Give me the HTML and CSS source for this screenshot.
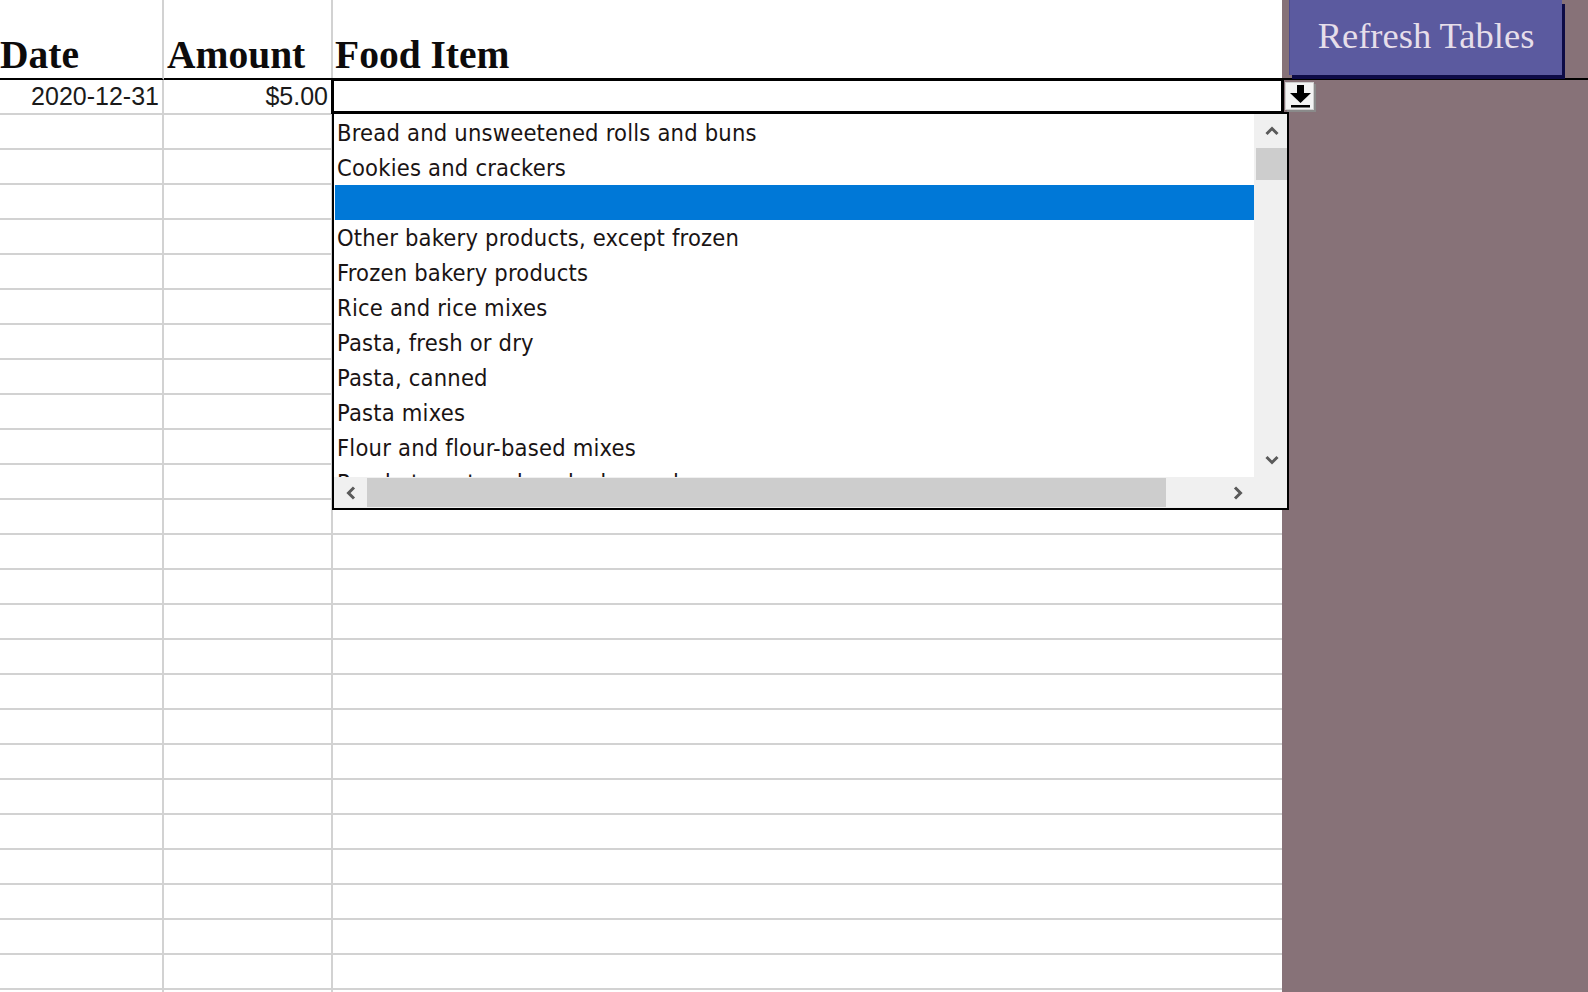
FILE: index.html
```html
<!DOCTYPE html>
<html lang="en">
<head>
<meta charset="utf-8">
<title>Food Log</title>
<link rel="stylesheet" href="styles.css">
</head>
<body>
<div class="app">
  <div class="sheet">
    <div class="row head">
      <div class="cell c1">Date</div>
      <div class="cell c2">Amount</div>
      <div class="cell c3">Food Item</div>
    </div>
    <div class="row data">
      <div class="cell c1">2020-12-31</div>
      <div class="cell c2">$5.00</div>
      <div class="cell c3"></div>
    </div>
    <div class="row"><div class="cell c1"></div><div class="cell c2"></div><div class="cell c3"></div></div>
    <div class="row"><div class="cell c1"></div><div class="cell c2"></div><div class="cell c3"></div></div>
    <div class="row"><div class="cell c1"></div><div class="cell c2"></div><div class="cell c3"></div></div>
    <div class="row"><div class="cell c1"></div><div class="cell c2"></div><div class="cell c3"></div></div>
    <div class="row"><div class="cell c1"></div><div class="cell c2"></div><div class="cell c3"></div></div>
    <div class="row"><div class="cell c1"></div><div class="cell c2"></div><div class="cell c3"></div></div>
    <div class="row"><div class="cell c1"></div><div class="cell c2"></div><div class="cell c3"></div></div>
    <div class="row"><div class="cell c1"></div><div class="cell c2"></div><div class="cell c3"></div></div>
    <div class="row"><div class="cell c1"></div><div class="cell c2"></div><div class="cell c3"></div></div>
    <div class="row"><div class="cell c1"></div><div class="cell c2"></div><div class="cell c3"></div></div>
    <div class="row"><div class="cell c1"></div><div class="cell c2"></div><div class="cell c3"></div></div>
    <div class="row"><div class="cell c1"></div><div class="cell c2"></div><div class="cell c3"></div></div>
    <div class="row"><div class="cell c1"></div><div class="cell c2"></div><div class="cell c3"></div></div>
    <div class="row"><div class="cell c1"></div><div class="cell c2"></div><div class="cell c3"></div></div>
    <div class="row"><div class="cell c1"></div><div class="cell c2"></div><div class="cell c3"></div></div>
    <div class="row"><div class="cell c1"></div><div class="cell c2"></div><div class="cell c3"></div></div>
    <div class="row"><div class="cell c1"></div><div class="cell c2"></div><div class="cell c3"></div></div>
    <div class="row"><div class="cell c1"></div><div class="cell c2"></div><div class="cell c3"></div></div>
    <div class="row"><div class="cell c1"></div><div class="cell c2"></div><div class="cell c3"></div></div>
    <div class="row"><div class="cell c1"></div><div class="cell c2"></div><div class="cell c3"></div></div>
    <div class="row"><div class="cell c1"></div><div class="cell c2"></div><div class="cell c3"></div></div>
    <div class="row"><div class="cell c1"></div><div class="cell c2"></div><div class="cell c3"></div></div>
    <div class="row"><div class="cell c1"></div><div class="cell c2"></div><div class="cell c3"></div></div>
    <div class="row"><div class="cell c1"></div><div class="cell c2"></div><div class="cell c3"></div></div>
    <div class="row"><div class="cell c1"></div><div class="cell c2"></div><div class="cell c3"></div></div>
    <div class="row"><div class="cell c1"></div><div class="cell c2"></div><div class="cell c3"></div></div>
  </div>
  <div class="panel">
    <div class="panel-top">
      <button class="refresh" type="button">Refresh Tables</button>
    </div>
  </div>

  <div class="sel-frame"></div>

  <div class="validate-btn">
    <svg width="26" height="26" viewBox="0 0 26 26" aria-hidden="true">
      <rect x="10" y="2" width="7" height="8" fill="#000"/>
      <polygon points="3,10 24,10 13.5,20" fill="#000"/>
      <rect x="4" y="22" width="19" height="2.5" fill="#000"/>
    </svg>
  </div>

  <div class="listbox">
    <div class="items">
      <div class="item">Bread and unsweetened rolls and buns</div>
      <div class="item">Cookies and crackers</div>
      <div class="item selected"></div>
      <div class="item">Other bakery products, except frozen</div>
      <div class="item">Frozen bakery products</div>
      <div class="item">Rice and rice mixes</div>
      <div class="item">Pasta, fresh or dry</div>
      <div class="item">Pasta, canned</div>
      <div class="item">Pasta mixes</div>
      <div class="item">Flour and flour-based mixes</div>
      <div class="item">Ready-to-eat and cooked cereals</div>
    </div>
    <div class="vscroll">
      <div class="sb-btn">
        <svg width="16" height="12" viewBox="0 0 16 12"><polyline points="2.5,9 8,3.5 13.5,9" fill="none" stroke="#5a5a5a" stroke-width="3"/></svg>
      </div>
      <div class="vthumb"></div>
      <div class="vtrack"></div>
      <div class="sb-btn">
        <svg width="16" height="12" viewBox="0 0 16 12"><polyline points="2.5,3 8,8.5 13.5,3" fill="none" stroke="#5a5a5a" stroke-width="3"/></svg>
      </div>
    </div>
    <div class="hscroll">
      <div class="sb-btn h">
        <svg width="12" height="16" viewBox="0 0 12 16"><polyline points="9,2.5 3.5,8 9,13.5" fill="none" stroke="#5a5a5a" stroke-width="3"/></svg>
      </div>
      <div class="hthumb"></div>
      <div class="htrack"></div>
      <div class="sb-btn h">
        <svg width="12" height="16" viewBox="0 0 12 16"><polyline points="3,2.5 8.5,8 3,13.5" fill="none" stroke="#5a5a5a" stroke-width="3"/></svg>
      </div>
    </div>
    <div class="corner"></div>
  </div>
</div>
</body>
</html>
```

FILE: styles.css
```css
html, body {
  margin: 0;
  padding: 0;
  background: #ffffff;
  overflow: hidden;
}

.app {
  position: relative;
  display: flex;
  width: 1588px;
  height: 992px;
  overflow: hidden;
  font-family: "Liberation Sans", Arial, sans-serif;
}

.sheet {
  flex: none;
  width: 1282px;
  background: #ffffff;
}

.row {
  display: grid;
  grid-template-columns: 164px 169px 949px;
  height: 35px;
}

.cell {
  box-sizing: border-box;
  border-right: 2px solid #d2d2d2;
  border-bottom: 2px solid #d2d2d2;
  overflow: hidden;
  white-space: nowrap;
}

.cell.c3 {
  border-right: none;
}

.head {
  height: 80px;
}

.head .cell {
  display: flex;
  align-items: flex-end;
  border-bottom: 2px solid #000000;
  padding: 0 0 3px 3px;
  font-family: "Liberation Serif", "Times New Roman", serif;
  font-weight: bold;
  font-size: 39.5px;
  line-height: 1;
  color: #0d0b0b;
}

.head .c1 {
  padding-left: 0;
}

.head .c3 {
  padding-left: 2px;
}

.data .cell {
  font-size: 25px;
  line-height: 33px;
  text-align: right;
  color: #1a1a1a;
  padding-right: 3px;
}

.data .c2 {
  padding-right: 3px;
}

.panel {
  flex: 1;
  background: #877278;
}

.panel-top {
  box-sizing: border-box;
  height: 80px;
  border-bottom: 2px solid #000000;
  padding-left: 7px;
}

.refresh {
  display: flex;
  align-items: center;
  justify-content: center;
  width: 273px;
  height: 75px;
  margin: 0;
  padding: 0 0 4px 0;
  border: none;
  border-left: 1px solid #4c4a90;
  background: #5b5a9f;
  box-shadow: 3px 4px 0 #0d0b46;
  color: #e6deea;
  font-family: "Liberation Serif", "Times New Roman", serif;
  font-size: 36.5px;
  cursor: pointer;
}

.sel-frame {
  position: absolute;
  left: 331px;
  top: 78px;
  width: 953px;
  height: 36px;
  box-sizing: border-box;
  border: 3px solid #000000;
  pointer-events: none;
}

.validate-btn {
  position: absolute;
  left: 1285px;
  top: 82px;
  width: 29px;
  height: 28px;
  box-sizing: border-box;
  background: #f4f4f4;
  border: 1px solid #cfcfcf;
  box-shadow: 2px 2px 0 #8a8a8a;
  display: flex;
  align-items: center;
  justify-content: center;
}

.listbox {
  position: absolute;
  left: 332px;
  top: 112px;
  width: 957px;
  height: 398px;
  box-sizing: border-box;
  border: 2px solid #000000;
  background: #ffffff;
  display: grid;
  grid-template-columns: 1fr 33px;
  grid-template-rows: 1fr 31px;
}

.items {
  overflow: hidden;
  padding-top: 1px;
  padding-left: 1px;
}

.item {
  height: 35px;
  box-sizing: border-box;
  padding: 2px 0 0 2px;
  font-family: "DejaVu Sans Condensed", "DejaVu Sans", sans-serif;
  font-stretch: condensed;
  font-size: 23.5px;
  letter-spacing: 0.2px;
  line-height: 33px;
  color: #1a1414;
  white-space: nowrap;
}

.item.selected {
  background: #0078d7;
}

.vscroll {
  background: #f0f0f0;
  display: flex;
  flex-direction: column;
  padding-left: 2px;
}

.sb-btn {
  flex: none;
  height: 34px;
  display: flex;
  align-items: center;
  justify-content: center;
}

.sb-btn.h {
  height: auto;
  width: 33px;
}

.vthumb {
  flex: none;
  height: 32px;
  background: #cdcdcd;
}

.vtrack {
  flex: 1;
}

.hscroll {
  background: #f0f0f0;
  display: flex;
  padding: 1px 0;
}

.hthumb {
  flex: none;
  width: 799px;
  background: #cdcdcd;
}

.htrack {
  flex: 1;
}

.corner {
  background: #f0f0f0;
}
```
